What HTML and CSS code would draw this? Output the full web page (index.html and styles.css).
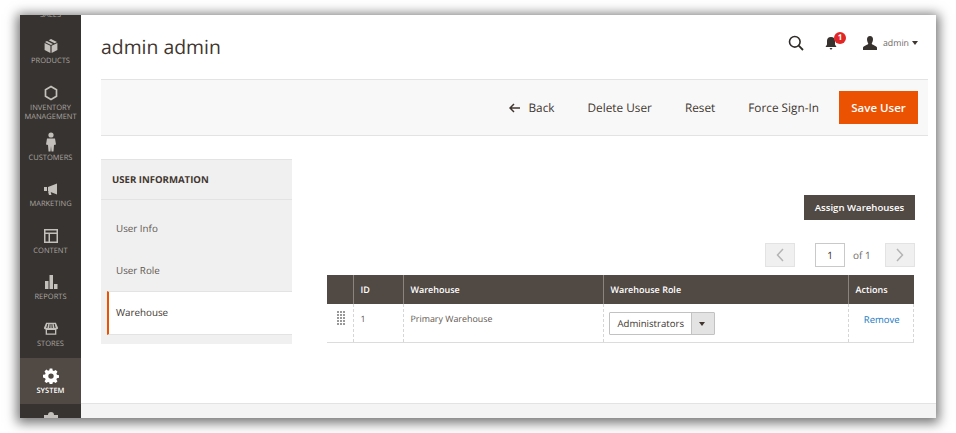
FILE: index.html
```html
<!DOCTYPE html>
<html lang="en">
<head>
  <meta charset="UTF-8">
  <meta name="viewport" content="width=device-width, initial-scale=1.0">
  <title>admin admin</title>
  <link rel="stylesheet" href="styles.css">
</head>

<body>
  <div class="frame">

    <!-- SIDE MENU -->
    <nav class="menu">
      <div class="menu-item first"><span class="menu-label">SALES</span></div>
      <div class="menu-item">
        <svg class="menu-icon" viewBox="0 0 16 16"><path d="M8 1l6 3-2.400 1.300-6-3zM3.900 2.900l6 3L8 6.900 2 4zM1.600 5l5.800 2.800V15l-5.800-3zM14.400 5v7l-5.800 3V7.800z" fill="currentColor"/></svg>
        <span class="menu-label">PRODUCTS</span>
      </div>
      <div class="menu-item tall">
        <svg class="menu-icon" viewBox="0 0 16 16"><path d="M8 1.500l5.500 3.200v6.600L8 14.500l-5.500-3.200V4.700z" fill="none" stroke="currentColor" stroke-width="1.700"/></svg>
        <span class="menu-label">INVENTORY<br>MANAGEMENT</span>
      </div>
      <div class="menu-item">
        <svg class="menu-icon big" viewBox="0 0 16 20"><circle cx="8" cy="3" r="2.600" fill="currentColor"/><path d="M4 6.500h8l1 6-2 .5-.5 6.500H8.500L8 14l-.5 5.500H5.500L5 13l-2-.5z" fill="currentColor"/></svg>
        <span class="menu-label">CUSTOMERS</span>
      </div>
      <div class="menu-item">
        <svg class="menu-icon" viewBox="0 0 16 16"><path d="M1 6h3v4H1zM5 6l9-3.500v11L5 10zM5 10.500h2.500L8.500 14H6z" fill="currentColor"/></svg>
        <span class="menu-label">MARKETING</span>
      </div>
      <div class="menu-item">
        <svg class="menu-icon" viewBox="0 0 16 16"><path d="M1 1h14v14H1zM2.500 2.500v2h11v-2zm0 3.500v7.500h3V6zm4.500 0v7.500h6.500V6z" fill="currentColor" fill-rule="evenodd"/></svg>
        <span class="menu-label">CONTENT</span>
      </div>
      <div class="menu-item">
        <svg class="menu-icon" viewBox="0 0 16 16"><path d="M2 7h3.500v8H2zM6.500 1H10v14H6.500zM11 10h3.500v5H11z" fill="currentColor"/></svg>
        <span class="menu-label">REPORTS</span>
      </div>
      <div class="menu-item">
        <svg class="menu-icon" viewBox="0 0 18 16"><path d="M3.500 1h11L17 7c0 1-1 1.500-2 1.500v6H3v-6C2 8.500 1 8 1 7zM4.800 2.500L3.600 7h1.300l1-4.500zm2.700 0L7 7h1.300l.2-4.500zm2 0l.2 4.500H11l-.5-4.500zm2.500 0L13 7h1.300l-1.100-4.500zM4.500 9v4h9V9z" fill="currentColor" fill-rule="evenodd"/></svg>
        <span class="menu-label">STORES</span>
      </div>
      <div class="menu-item active">
        <svg class="menu-icon" viewBox="0 0 16 16"><path d="M6.700.5h2.600l.4 2.100 1.200.5L12.700 2l1.800 1.800-1.100 1.800.5 1.200 2.100.4v2.600l-2.100.4-.5 1.200 1.100 1.800-1.800 1.800-1.800-1.100-1.200.5-.4 2.100H6.700l-.4-2.100-1.200-.5-1.800 1.100-1.800-1.800 1.100-1.800-.5-1.200L0 9.400V6.800l2.100-.4.500-1.200L1.500 3.400 3.300 1.600l1.800 1.100 1.200-.5zM8 5.400a2.700 2.700 0 1 0 0 5.400 2.700 2.700 0 0 0 0-5.400z" fill="currentColor" fill-rule="evenodd"/></svg>
        <span class="menu-label">SYSTEM</span>
      </div>
      <div class="menu-item last">
        <svg class="menu-icon" viewBox="0 0 16 16"><path d="M5 3a3 3 0 0 1 6 0h4v11H1V3z" fill="currentColor"/></svg>
      </div>
    </nav>

    <div class="main">

      <!-- TOP BAR -->
      <header class="top">
        <h1 class="page-title">admin admin</h1>
        <div class="top-actions">
          <svg class="search-icon" viewBox="0 0 16 16"><circle cx="6.800" cy="6.800" r="5.300" fill="none" stroke="#2f2b28" stroke-width="1.600"/><path d="M10.700 10.700l4.300 4.300" stroke="#2f2b28" stroke-width="1.800"/></svg>
          <div class="bell">
            <svg class="bell-icon" viewBox="0 0 12 14"><path d="M6 1a4 4 0 0 1 4 4v3.500L11.500 11H.5L2 8.500V5a4 4 0 0 1 4-4zM4.500 12h3L6 14z" fill="#38322e"/></svg>
            <span class="badge">1</span>
          </div>
          <div class="user">
            <svg class="user-icon" viewBox="0 0 14 14"><path d="M7 0c2 0 3 1.400 3 3.300S9 7 8.700 7.700c0 1 4.300 1.700 5.300 3.700V14H0v-2.600C1 9.400 5.300 8.700 5.300 7.700 5 7 4 5.200 4 3.300S5 0 7 0z" fill="#38322e"/></svg>
            <span class="user-name">admin</span>
            <span class="caret"></span>
          </div>
        </div>
      </header>

      <!-- PAGE ACTIONS -->
      <div class="toolbar">
        <a class="tool back">
          <svg class="arrow" viewBox="0 0 11 10"><path d="M5 1L1 5l4 4M1 5h10" fill="none" stroke="#41362f" stroke-width="1.500"/></svg>
          Back
        </a>
        <a class="tool">Delete User</a>
        <a class="tool">Reset</a>
        <a class="tool force">Force Sign-In</a>
        <button type="button" class="save">Save User</button>
      </div>

      <div class="content">
        <aside class="tabs">
          <div class="tabs-title">USER INFORMATION</div>
          <div class="tab-list">
            <a class="tab">User Info</a>
            <a class="tab">User Role</a>
            <a class="tab current">Warehouse</a>
          </div>
        </aside>

        <section class="panel">
          <div class="assign-row">
            <button type="button" class="assign">Assign Warehouses</button>
          </div>
          <div class="pager">
            <span class="page-btn"><svg viewBox="0 0 8 14"><path d="M7 1L1.500 7 7 13" fill="none" stroke="#b4b4b4" stroke-width="1.500"/></svg></span>
            <span class="page-input">1</span>
            <span class="page-of">of 1</span>
            <span class="page-btn"><svg viewBox="0 0 8 14"><path d="M1 1l5.500 6L1 13" fill="none" stroke="#b4b4b4" stroke-width="1.500"/></svg></span>
          </div>

          <table class="grid">
            <colgroup>
              <col class="col-drag"><col class="col-id"><col class="col-name"><col class="col-role"><col>
            </colgroup>
            <thead>
              <tr>
                <th></th>
                <th>ID</th>
                <th>Warehouse</th>
                <th>Warehouse Role</th>
                <th>Actions</th>
              </tr>
            </thead>
            <tbody>
              <tr>
                <td class="drag"><span class="grip"></span></td>
                <td class="id">1</td>
                <td>Primary Warehouse</td>
                <td class="role">
                  <div class="select">
                    <span class="select-value">Administrators</span>
                    <span class="select-arrow"></span>
                  </div>
                </td>
                <td class="actions"><a class="remove">Remove</a></td>
              </tr>
            </tbody>
          </table>
        </section>
      </div>

      <footer class="foot"></footer>
    </div>
  </div>
</body>
</html>
```

FILE: styles.css
```css
* {
  box-sizing: border-box;
}

html, body {
  height: 100%;
}

body {
  margin: 0;
  padding: 15px 20px;
  background: #fff;
  font-family: "Open Sans", "Noto Sans", sans-serif;
  color: #41362f;
  text-rendering: geometricPrecision;
  overflow: hidden;
}

.frame {
  display: flex;
  width: 916px;
  height: 403px;
  background: #fff;
  overflow: hidden;
  box-shadow: 0 2px 11px 3px rgba(0, 0, 0, .55);
}

/* side menu */
.menu {
  flex: 0 0 61px;
  height: 403px;
  background: #373330;
  overflow: hidden;
}

.menu-item {
  display: flex;
  flex-direction: column;
  align-items: center;
  justify-content: flex-end;
  height: 46.5px;
  padding-bottom: 9px;
  color: #aaa6a0;
  text-align: center;
}

.menu-item.first {
  height: 10px;
  margin-top: -5px;
  margin-bottom: 8.5px;
  padding-bottom: 0;
}

.menu-item.tall {
  height: 50px;
  padding-bottom: 3.5px;
}

.menu-item.active {
  background: #514943;
  color: #fff;
  margin-top: .5px;
  height: 46px;
  padding-bottom: 8.5px;
}

.menu-item.last {
  justify-content: flex-start;
  padding: 8px 0 0;
}

.menu-icon {
  flex: none;
  width: 16px;
  height: 16px;
  margin-bottom: 3px;
  color: #c3bfba;
}

.menu-item.active .menu-icon {
  color: #fff;
}

.menu-icon.big {
  height: 20px;
  margin-bottom: 2px;
}

.menu-label {
  font-size: 7.5px;
  line-height: 9px;
  white-space: nowrap;
}

.menu-item.active .menu-label {
  font-weight: 600;
}

/* main column */
.main {
  flex: 1;
  display: flex;
  flex-direction: column;
  min-width: 0;
}

.top {
  flex: 0 0 64px;
  display: flex;
  justify-content: space-between;
  align-items: center;
  padding: 0 18px 0 20px;
}

.page-title {
  margin: 0 0 2px;
  font-size: 19.4px;
  font-weight: 400;
  color: #41362f;
}

.top-actions {
  display: flex;
  align-items: center;
  margin-bottom: 8px;
}

.search-icon {
  width: 16px;
  height: 16px;
  margin-right: 21px;
}

.bell {
  position: relative;
  width: 12px;
  height: 14px;
  margin-right: 26px;
}

.bell-icon {
  display: block;
  width: 12px;
  height: 14px;
}

.badge {
  position: absolute;
  top: -4px;
  left: 9px;
  width: 12px;
  height: 12px;
  border-radius: 50%;
  background: #e22626;
  color: #fff;
  font-size: 8px;
  font-weight: 700;
  line-height: 12px;
  text-align: center;
}

.user {
  display: flex;
  align-items: center;
}

.user-icon {
  width: 14px;
  height: 14px;
  margin-right: 6px;
}

.user-name {
  font-size: 8.8px;
  color: #6f6a66;
}

.caret {
  width: 0;
  height: 0;
  margin-left: 3px;
  border-left: 3px solid transparent;
  border-right: 3px solid transparent;
  border-top: 4px solid #41362f;
}

/* page actions */
.toolbar {
  flex: 0 0 57px;
  display: flex;
  justify-content: flex-end;
  align-items: center;
  margin: 0 8px 0 20px;
  padding-right: 10px;
  background: #f8f8f8;
  border-top: 1px solid #e3e3e3;
  border-bottom: 1px solid #e3e3e3;
}

.tool {
  display: flex;
  align-items: center;
  margin-right: 33px;
  font-size: 11.8px;
  font-weight: 500;
  color: #41362f;
}

.tool.force {
  margin-right: 20px;
}

.arrow {
  width: 11px;
  height: 10px;
  margin-right: 8px;
}

.save {
  width: 79px;
  height: 33px;
  padding: 0;
  border: 1px solid #eb5202;
  background: #eb5202;
  color: #fff;
  font-family: inherit;
  font-size: 11.5px;
  font-weight: 600;
}

/* content */
.content {
  flex: 1;
  display: flex;
  padding: 23px 0 0 20px;
}

.tabs {
  flex: 0 0 191px;
  height: 185px;
  background: #f0f0f0;
  border-top: 1px solid #e3e3e3;
}

.tabs-title {
  height: 40px;
  padding-left: 11px;
  border-bottom: 1px solid #e3e3e3;
  font-size: 9.6px;
  font-weight: 700;
  line-height: 39px;
  color: #41362f;
}

.tab-list {
  padding-top: 7px;
}

.tab {
  display: block;
  height: 42px;
  padding-left: 15px;
  font-size: 9.8px;
  line-height: 43px;
  color: #5f5750;
}

.tab.current {
  height: 44px;
  margin-left: 6px;
  padding-left: 7px;
  background: #fff;
  border-left: 2px solid #eb5202;
  border-top: 1px solid #e3e3e3;
  border-bottom: 1px solid #e3e3e3;
  line-height: 42px;
  color: #41362f;
}

.panel {
  flex: 0 0 589px;
  margin-left: 34px;
  padding-top: 36px;
}

.assign-row {
  display: flex;
  justify-content: flex-end;
}

.assign {
  width: 111px;
  height: 25px;
  padding: 0;
  border: 0;
  background: #514943;
  color: #fff;
  font-family: inherit;
  font-size: 9.6px;
  font-weight: 600;
}

.pager {
  display: flex;
  justify-content: flex-end;
  align-items: center;
  margin-top: 23px;
  height: 24px;
}

.page-btn {
  display: flex;
  align-items: center;
  justify-content: center;
  width: 30px;
  height: 24px;
  background: #f0f0f0;
  border: 1px solid #e3e3e3;
}

.page-btn svg {
  width: 8px;
  height: 14px;
}

.page-input {
  width: 30px;
  height: 24px;
  margin-left: 20px;
  border: 1px solid #c9c9c9;
  background: #fff;
  font-size: 10px;
  line-height: 22px;
  text-align: center;
}

.page-of {
  width: 32px;
  margin-right: 8px;
  padding-left: 8px;
  font-size: 10px;
  color: #6f6a66;
}

/* warehouse table */
.grid {
  width: 587px;
  margin: 8px 0 0 1px;
  border-collapse: collapse;
  table-layout: fixed;
  font-size: 8.9px;
}

.col-drag {
  width: 26px;
}

.col-id {
  width: 50px;
}

.col-name {
  width: 200px;
}

.col-role {
  width: 245px;
}

.grid th {
  height: 29px;
  padding: 0 7px;
  background: #514943;
  border-left: 1px solid #8a837e;
  color: #fff;
  font-size: 9px;
  font-weight: 600;
  text-align: left;
}

.grid th:first-child {
  border-left: 0;
}

.grid td {
  height: 38px;
  padding: 8px 7px 0;
  vertical-align: top;
  border-left: 1px dashed #d6d6d6;
  border-right: 1px dashed #d6d6d6;
  border-bottom: 1px solid #dcdcdc;
  color: #5f5750;
}

.grid td.drag {
  padding: 7px 0 0 10px;
  border-left: 0;
}

.grip {
  display: block;
  width: 8px;
  height: 14px;
  background:
    repeating-linear-gradient(90deg, transparent 0 2px, #fff 2px 3px),
    repeating-linear-gradient(0deg, #999 0 2px, #fff 2px 3px);
}

.grid td.role {
  padding: 8px 5px 0;
}

.select {
  display: flex;
  width: 106px;
  height: 23px;
  border: 1px solid #c2c2c2;
  border-radius: 1px;
  background: #fff;
}

.select-value {
  flex: 1;
  padding-left: 8px;
  font-size: 9.6px;
  line-height: 21px;
  color: #41362f;
}

.select-arrow {
  position: relative;
  width: 23px;
  background: #e3e3e3;
  border-left: 1px solid #c2c2c2;
}

.select-arrow::after {
  content: "";
  position: absolute;
  top: 9px;
  left: 7px;
  border-left: 3px solid transparent;
  border-right: 3px solid transparent;
  border-top: 4px solid #41362f;
}

.grid td.actions {
  padding: 9px 5px 0 7px;
  text-align: center;
}

.remove {
  font-size: 9.5px;
  color: #1979c3;
}

.foot {
  flex: 0 0 15px;
  background: #f4f4f4;
  border-top: 1px solid #e3e3e3;
}
```
